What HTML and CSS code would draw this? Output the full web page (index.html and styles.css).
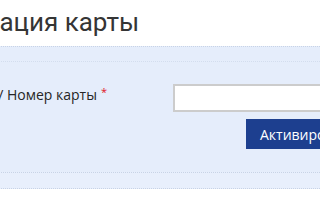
FILE: index.html
```html
<!DOCTYPE html>
<html lang="ru">
<head>
    <meta charset="UTF-8">
    <meta name="viewport" content="width=device-width, initial-scale=1.0">
    <title>Активация карты</title>
    <link rel="stylesheet" href="styles.css">
</head>
<body>
    <div class="page">
        <h1 class="page-title">Активация карты</h1>

        <div class="card-panel">
            <div class="panel-head"></div>
            <form class="activate-form">
                <div class="form-row">
                    <label for="card-number">Номер телефона / Номер карты<span class="req">*</span></label>
                    <input type="text" id="card-number" name="card-number">
                </div>
                <div class="form-actions">
                    <button type="button" class="activate-button">Активировать</button>
                </div>
            </form>
            <div class="panel-foot"></div>
        </div>
    </div>
</body>
</html>
```

FILE: styles.css
```css
body {
    margin: 0;
    padding: 0;
    background: #ffffff;
    color: #333333;
    font-family: 'Open Sans', Arial, sans-serif;
    overflow: hidden;
}

.page {
    margin-left: -120px;
    width: 580px;
}

.page-title {
    margin: 0 0 0 46px;
    padding: 9px 0 11px;
    font-family: Roboto, 'Open Sans', Arial, sans-serif;
    font-size: 26px;
    font-weight: 400;
    line-height: 26px;
    color: #353535;
    white-space: nowrap;
}

.card-panel {
    background: #e5edfb;
    border-top: 1px dotted #c8d3e6;
}

.panel-head {
    height: 14px;
    border-bottom: 1px dotted #d3ddee;
}

.activate-form {
    padding: 22px 0 23px;
}

.form-row {
    display: flex;
    align-items: flex-start;
}

.form-row label {
    width: 227px;
    flex-shrink: 0;
    margin-right: 66px;
    text-align: right;
    white-space: nowrap;
    font-size: 14px;
    line-height: 16px;
    color: #262626;
}

.req {
    margin-left: 4px;
    color: #e0141e;
    font-size: 11px;
    vertical-align: 4px;
}

.form-row input {
    box-sizing: border-box;
    width: 240px;
    height: 28px;
    border: 2px solid #cccccc;
    background: #ffffff;
    padding: 0 6px;
}

.form-actions {
    margin-top: 7px;
    padding-left: 366px;
}

.activate-button {
    display: block;
    background: #1d3f8f;
    color: #ffffff;
    border: none;
    height: 30px;
    padding: 0 14px;
    font-family: 'Open Sans', Arial, sans-serif;
    font-size: 14px;
    white-space: nowrap;
}

.panel-foot {
    height: 15px;
    border-top: 1px dotted #c8d3e6;
    border-bottom: 1px dotted #c8d3e6;
    background: #e8effc;
}
```
